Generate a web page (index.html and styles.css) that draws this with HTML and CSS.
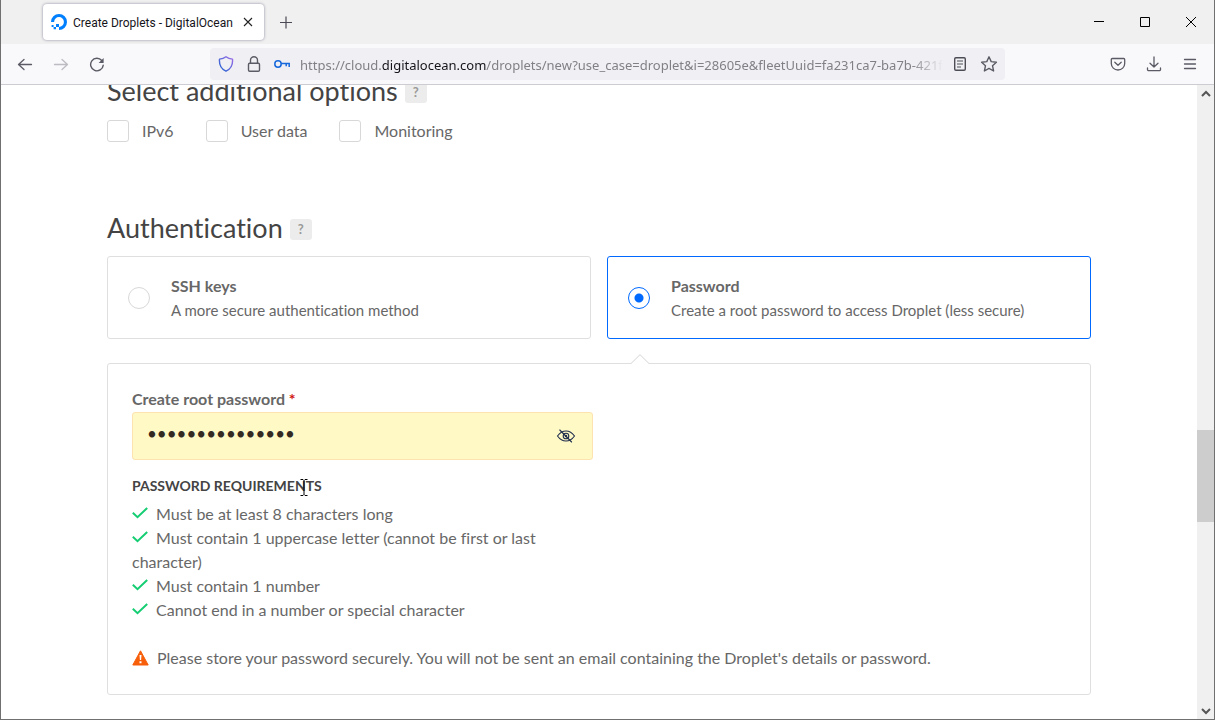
FILE: index.html
```html
<!DOCTYPE html>
<html lang="en">
<head>
<meta charset="utf-8">
<title>Create Droplets - DigitalOcean</title>
<link rel="stylesheet" href="styles.css">
</head>
<body>
<div class="window">
  <header class="tabbar">
    <div class="tab">
      <svg class="icon" width="16" height="16" viewBox="0 0 16 16" fill="#0080ff" aria-hidden="true"><path d="M8 16v-3.1a4.9 4.9 0 1 0-4.9-4.9H0a8 8 0 1 1 8 8z"/><path d="M5 10h3v3H5zM2.6 13H5v2.3H2.6zM.6 11h2v2h-2z"/></svg>
      <span class="tab-title">Create Droplets - DigitalOcean</span>
      <button class="plain" aria-label="Close tab"><svg width="16" height="16" viewBox="0 0 16 16" fill="none" stroke="#222" stroke-width="1.1"><path d="M4 4l8 8M12 4l-8 8"/></svg></button>
    </div>
    <button class="plain new-tab" aria-label="New tab"><svg width="16" height="16" viewBox="0 0 16 16" fill="none" stroke="#4b4a54" stroke-width="1.2"><path d="M8 2.500v12M2 8.500h12"/></svg></button>
    <div class="window-buttons">
      <button class="plain" aria-label="Minimize"><svg width="12" height="12" viewBox="0 0 12 12"><path d="M1 5h10v1H1z"/></svg></button>
      <button class="plain" aria-label="Maximize"><svg width="12" height="12" viewBox="0 0 12 12" fill="none" stroke="#000"><path d="M1.500 1.500h9v9h-9z"/></svg></button>
      <button class="plain" aria-label="Close"><svg width="12" height="12" viewBox="0 0 12 12" fill="none" stroke="#000"><path d="M1 1l10 10M11 1L1 11"/></svg></button>
    </div>
  </header>

  <nav class="toolbar">
    <div class="nav-buttons">
      <button class="plain" aria-label="Back"><svg width="16" height="16" viewBox="0 0 16 16" fill="none" stroke="#5b5b66" stroke-width="1.3" stroke-linecap="round" stroke-linejoin="round"><path d="M14.500 8.500H1.500M7 3.500L1.500 8.500L7 13.500"/></svg></button>
      <button class="plain" aria-label="Forward" disabled><svg width="16" height="16" viewBox="0 0 16 16" fill="none" stroke="#bcbcc2" stroke-width="1.3" stroke-linecap="round" stroke-linejoin="round"><path d="M1.500 8.500h13M9 3.500L14.500 8.500L9 13.500"/></svg></button>
      <button class="plain" aria-label="Reload"><svg width="16" height="16" viewBox="0 0 16 16" fill="none" stroke="#5b5b66" stroke-width="1.4" stroke-linecap="round"><path d="M12.800 4.500A6.300 6.300 0 1 0 14.200 9.300"/><path d="M14.600 2v5h-5z" fill="#5b5b66" stroke="none"/></svg></button>
    </div>
    <div class="address">
      <button class="plain" aria-label="Tracking protection"><svg width="16" height="16" viewBox="0 0 16 16" fill="none" stroke="url(#shield)" stroke-width="1.4" stroke-linejoin="round"><defs><linearGradient id="shield" x1="0" y1="1" x2="1" y2="0"><stop offset="0" stop-color="#1d62cf"/><stop offset="1" stop-color="#a06ce8"/></linearGradient></defs><path d="M8 .8C10 2.300 12 2.900 14.500 3.100C15 8.700 13 13 8 15.200C3 13 1 8.700 1.500 3.100C4 2.900 6 2.300 8 .8z"/></svg></button>
      <button class="plain" aria-label="Connection secure"><svg width="16" height="16" viewBox="0 0 16 16" fill="none" stroke="#5b5b66" stroke-width="1.4"><rect x="2.500" y="7.200" width="11" height="8" rx="1.200"/><path d="M4.500 7V4.200a3.500 3.500 0 0 1 7 0V7"/></svg></button>
      <button class="plain" aria-label="Saved login"><svg width="16" height="16" viewBox="0 0 16 16" fill="none" stroke="#1668dc" stroke-width="1.500"><circle cx="4" cy="8" r="3.200"/><path d="M7.200 7.500H15.200V11M12.200 7.500v2.800"/></svg></button>
      <div class="url" role="textbox" aria-label="Address">https://cloud.<span class="domain">digitalocean.com</span>/droplets/new?use_case=droplet&amp;i=28605e&amp;fleetUuid=fa231ca7-ba7b-421f</div>
      <button class="plain" aria-label="Reader view"><svg width="16" height="16" viewBox="0 0 16 16" fill="none" stroke="#4c4c56" stroke-width="1.4"><rect x="2.700" y="1.700" width="10.600" height="12.600" rx="1.200"/><path d="M5 5h6M5 8h6M5 11h4" stroke-width="1.100"/></svg></button>
      <button class="plain" aria-label="Bookmark"><svg width="18" height="18" viewBox="0 0 18 18" fill="none" stroke="#5b5b66" stroke-width="1.4" stroke-linejoin="round"><path d="M9 1.800l2.200 4.800 5.200.6-3.900 3.500 1.100 5.300L9 13.400 4.400 16l1.100-5.300L1.600 7.200l5.200-.6z"/></svg></button>
    </div>
    <div class="menu-buttons">
      <button class="plain" aria-label="Pocket"><svg width="16" height="16" viewBox="0 0 16 16" fill="none" stroke="#5b5b66" stroke-width="1.3" stroke-linecap="round" stroke-linejoin="round"><path d="M2.300 2.500h11.400a1 1 0 0 1 1 1V7.500a6.700 6.500 0 0 1-13.400 0V3.500a1 1 0 0 1 1-1z"/><path d="M4.800 6.300L8 9.300l3.200-3"/></svg></button>
      <button class="plain" aria-label="Downloads"><svg width="16" height="16" viewBox="0 0 16 16" fill="none" stroke="#5b5b66" stroke-width="1.3" stroke-linecap="round" stroke-linejoin="round"><path d="M8 1v10M4 7.200L8 11l4-3.800M1.500 12v1.500a1.200 1.200 0 0 0 1.200 1.200h10.600a1.200 1.200 0 0 0 1.200-1.200V12"/></svg></button>
      <button class="plain" aria-label="Menu"><svg width="16" height="16" viewBox="0 0 16 16" fill="none" stroke="#5b5b66" stroke-width="1.300" stroke-linecap="round"><path d="M2.500 3.500h11M2.500 8h11M2.500 12.500h11"/></svg></button>
    </div>
  </nav>

  <div class="viewport">
    <main class="page">
      <div class="heading-row clipped">
        <h2>Select additional options</h2>
        <button class="help" aria-label="Help with additional options">?</button>
      </div>
      <div class="options">
        <label><input type="checkbox" class="check">IPv6</label>
        <label><input type="checkbox" class="check">User data</label>
        <label><input type="checkbox" class="check">Monitoring</label>
      </div>

      <div class="heading-row">
        <h2>Authentication</h2>
        <button class="help" aria-label="Help with authentication">?</button>
      </div>
      <div class="methods">
        <label class="method">
          <input type="radio" class="radio" name="auth" value="ssh">
          <span class="method-text"><strong>SSH keys</strong><span class="description">A more secure authentication method</span></span>
        </label>
        <label class="method selected">
          <input type="radio" class="radio" name="auth" value="password" checked>
          <span class="method-text"><strong>Password</strong><span class="description">Create a root password to access Droplet (less secure)</span></span>
        </label>
      </div>

      <section class="panel">
        <svg class="notch" width="20" height="10" viewBox="0 0 20 10" aria-hidden="true"><path d="M1 9.500L10 .7l9 8.800v.5H1z" fill="#fff"/><path d="M1 9.500L10 .7l9 8.800" fill="none" stroke="#d4d4d4"/></svg>
        <div class="column">
          <label class="field-label" for="root-password">Create root password <span class="required">*</span></label>
          <div class="field">
            <input id="root-password" class="password" type="password" value="Droplet2Secure!">
            <button class="plain" aria-label="Show password"><svg width="20" height="16" viewBox="0 0 20 16" fill="none" stroke="#1f2d4d" stroke-width="1.1" stroke-linecap="round"><path d="M1.500 8C4 4.500 6.800 3 10 3s6 1.500 8.500 5c-2.500 3.500-5.300 5-8.500 5S4 11.500 1.500 8z"/><circle cx="10" cy="8" r="2.800"/><circle cx="10" cy="8" r=".7"/><path d="M3.800 2l11.800 12"/></svg></button>
          </div>
          <h3>PASSWORD REQUIREMENTS</h3>
          <svg class="ibeam" width="8" height="17" viewBox="0 0 8 17" fill="none" stroke="#000" aria-hidden="true"><path d="M.5 .5h2.500l1 1 1-1h2.500M4 1.500v14M.5 16.500h2.500l1-1 1 1h2.500"/></svg>
          <ul class="requirements">
            <li><svg class="tick" width="16" height="12" viewBox="0 0 16 12"><path d="M.8 5.800l4.700 4.400L15.200 1"/></svg>Must be at least 8 characters long</li>
            <li><svg class="tick" width="16" height="12" viewBox="0 0 16 12"><path d="M.8 5.800l4.700 4.400L15.200 1"/></svg>Must contain 1 uppercase letter (cannot be first or last character)</li>
            <li><svg class="tick" width="16" height="12" viewBox="0 0 16 12"><path d="M.8 5.800l4.700 4.400L15.200 1"/></svg>Must contain 1 number</li>
            <li><svg class="tick" width="16" height="12" viewBox="0 0 16 12"><path d="M.8 5.800l4.700 4.400L15.200 1"/></svg>Cannot end in a number or special character</li>
          </ul>
        </div>
        <p class="warning"><svg width="17" height="16" viewBox="0 0 17 16" aria-hidden="true"><path d="M8.500.8L16.200 15H.8z" fill="#f75f0a" stroke="#f75f0a" stroke-width="1" stroke-linejoin="round"/><path d="M7.500 5h2l-.4 5H7.900zM7.500 11.200h2v2h-2z" fill="#fff"/></svg>Please store your password securely. You will not be sent an email containing the Droplet's details or password.</p>
      </section>
    </main>
    <div class="scrollbar">
      <button class="plain" aria-label="Scroll up"><svg width="10" height="8" viewBox="0 0 10 8" fill="none" stroke="#555" stroke-width="2"><path d="M1 6l4-4 4 4"/></svg></button>
      <div class="track"><div class="thumb"></div></div>
      <button class="plain" aria-label="Scroll down"><svg width="10" height="8" viewBox="0 0 10 8" fill="none" stroke="#555" stroke-width="2"><path d="M1 2l4 4 4-4"/></svg></button>
    </div>
  </div>
</div>
</body>
</html>
```
FILE: styles.css
```css
* { box-sizing: border-box; }

body {
  margin: 0;
  background: #fff;
  color: #676767;
  font: 16px/24px Lato, sans-serif;
  font-variant-ligatures: none;
}

h2, h3, p, ul { margin: 0; padding: 0; }

.window {
  display: flex;
  flex-direction: column;
  height: 100vh;
  overflow: hidden;
  border: 1px solid #707070;
  border-top: 0;
}

.icon { flex: none; }

.plain {
  display: flex;
  align-items: center;
  justify-content: center;
  flex: none;
  padding: 0;
  border: 0;
  background: none;
}

/* Browser chrome */
.tabbar {
  display: flex;
  align-items: center;
  flex: none;
  height: 44px;
  padding: 0 17px 0 42px;
  background: #f0f0f0;
}

.tab {
  display: flex;
  align-items: center;
  width: 221px;
  height: 36px;
  padding: 0 8px;
  border-radius: 4px;
  background: #fff;
  box-shadow: 0 0 3px #8888a0;
  color: #15141a;
  font: 12px/18px Roboto, sans-serif;
}

.tab-title {
  flex: 1;
  min-width: 0;
  padding: 2px 0 0 6px;
  white-space: nowrap;
}

.new-tab { margin-left: 14px; }

.window-buttons {
  display: flex;
  gap: 34px;
  margin-left: auto;
}

.toolbar {
  display: flex;
  align-items: center;
  flex: none;
  height: 41px;
  padding: 0 16px;
  border-bottom: 1px solid #ccccd2;
  background: #f9f9fb;
}

.nav-buttons, .menu-buttons {
  display: flex;
  gap: 20px;
}

.address {
  display: flex;
  align-items: center;
  gap: 12px;
  flex: 1;
  min-width: 0;
  height: 32px;
  margin: 0 105px;
  padding: 0 7px 0 8px;
  border-radius: 4px;
  background: #f0f0f4;
}

.url {
  flex: 1;
  min-width: 0;
  margin: 2px -3px 0 -2px;
  overflow: hidden;
  color: #808086;
  font: 13px/20px "Noto Sans", sans-serif;
  white-space: nowrap;
  -webkit-mask-image: linear-gradient(to left, transparent, #000 32px);
  mask-image: linear-gradient(to left, transparent, #000 32px);
}

.domain { color: #15141a; }

/* Page */
.viewport {
  display: flex;
  flex: 1;
  min-height: 0;
}

.page {
  flex: 1;
  min-width: 0;
  padding: 0 106px;
  overflow: hidden;
}

.heading-row {
  display: flex;
  align-items: center;
  gap: 7px;
  height: 32px;
}

.heading-row.clipped { margin-top: -10px; }

h2 {
  color: #444;
  font-size: 27px;
  font-weight: 400;
  line-height: 32px;
}

.help {
  width: 22px;
  height: 21px;
  margin-top: 3px;
  padding: 0;
  border: 0;
  border-radius: 3px;
  background: #ececec;
  color: #999;
  font: bold 13px/21px Lato, sans-serif;
}

.options {
  display: flex;
  gap: 32px;
  margin: 12px 0 69px;
}

.options label {
  display: flex;
  align-items: center;
  gap: 13px;
}

.check, .radio {
  flex: none;
  appearance: none;
  width: 22px;
  height: 22px;
  margin: 0;
  border: 1px solid #d8d8d8;
  border-radius: 3px;
  background: #fff;
}

.radio { border-radius: 50%; }

.radio:checked {
  border-color: #0069ff;
  background: radial-gradient(circle, #0069ff 4px, #fff 5px);
}

.methods {
  display: grid;
  grid-template-columns: 1fr 1fr;
  gap: 16px;
  margin-top: 12px;
}

.method {
  display: flex;
  align-items: center;
  gap: 21px;
  padding: 17px 20px 16px;
  border: 1px solid #dfdfdf;
  border-radius: 3px;
}

.method.selected { border-color: #0069ff; }

.method-text {
  display: flex;
  flex-direction: column;
}

.description { font-size: 15px; }

.panel {
  position: relative;
  margin-top: 24px;
  padding: 23px 24px 24px;
  border: 1px solid #dfdfdf;
  border-radius: 3px;
}

.notch {
  position: absolute;
  top: -10px;
  left: calc(50% + 31px);
}

.column {
  position: relative;
  width: calc(50% - 6px);
}

.field-label {
  display: block;
  margin-bottom: 1px;
  font-weight: 700;
}

.required { color: #d0140f; }

.field {
  display: flex;
  align-items: center;
  height: 48px;
  padding: 0 16px 0 14px;
  border: 1px solid #fce3b0;
  border-radius: 3px;
  background: #fff9c6;
}

.password {
  flex: 1;
  min-width: 0;
  padding: 0 0 4px;
  border: 0;
  outline: 0;
  background: none;
  color: #332b22;
  font: 17px/24px Lato, sans-serif;
}

h3 {
  margin: 15px 0 5px;
  color: #444;
  font-size: 14px;
  font-weight: 700;
  line-height: 22px;
}

.ibeam {
  position: absolute;
  top: 92px;
  left: 168px;
}

.requirements { list-style: none; }

.tick {
  margin-right: 8px;
  vertical-align: 1px;
  fill: none;
  stroke: #15cd72;
  stroke-width: 2;
}

.warning {
  display: flex;
  align-items: center;
  gap: 8px;
  margin-top: 24px;
}

/* Scrollbar */
.scrollbar {
  display: flex;
  flex-direction: column;
  flex: none;
  width: 17px;
  background: #f0f0f0;
}

.scrollbar button { height: 17px; }

.track {
  display: grid;
  flex: 1;
  grid-template-rows: 328fr 92fr 180fr;
}

.thumb {
  grid-row: 2;
  background: #cdcdcd;
}
```
